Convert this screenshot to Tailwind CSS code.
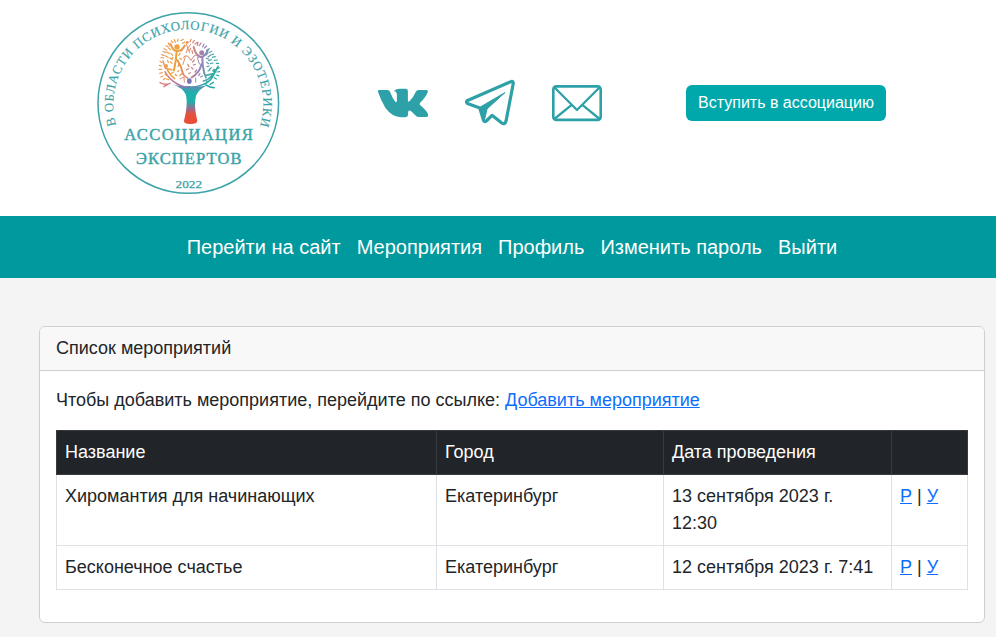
<!DOCTYPE html>
<html lang="ru">
<head>
<meta charset="utf-8">
<title>Список мероприятий</title>
<script src="https://cdn.jsdelivr.net/npm/@tailwindcss/browser@4"></script>
</head>
<body class="min-h-screen bg-[#f4f4f4] font-['Liberation_Sans',Arial,sans-serif] text-[#212529]">
<header class="flex h-[216px] items-center bg-white pb-[10px] pl-[90px]">
  <svg class="mt-[5px] h-[200px] w-[200px] shrink-0 self-start" viewBox="0 0 200 200" role="img" aria-label="Логотип">
    <defs>
      <path id="arc" d="M26.2 120A75 75 0 1 1 170.400 120"/>
      <linearGradient id="crown" gradientUnits="userSpaceOnUse" x1="205" y1="150" x2="392" y2="190">
        <stop offset="0" stop-color="#e79a72"/><stop offset=".28" stop-color="#eea23c"/><stop offset=".48" stop-color="#e0876f"/><stop offset=".68" stop-color="#9a83b5"/><stop offset=".85" stop-color="#3fb0a8"/><stop offset="1" stop-color="#25a9a0"/>
      </linearGradient>
      <linearGradient id="trunk" gradientUnits="userSpaceOnUse" x1="0" y1="228" x2="0" y2="356">
        <stop offset="0" stop-color="#8a74b0"/><stop offset=".28" stop-color="#1fb0ae"/><stop offset=".48" stop-color="#1fb0ae"/><stop offset=".66" stop-color="#a0688a"/><stop offset=".78" stop-color="#e8503a"/><stop offset="1" stop-color="#e84c35"/>
      </linearGradient>
      <linearGradient id="bough" gradientUnits="userSpaceOnUse" x1="225" y1="0" x2="380" y2="0">
        <stop offset="0" stop-color="#dd7f82"/><stop offset=".4" stop-color="#8d75b2"/><stop offset=".75" stop-color="#25aaa8"/><stop offset="1" stop-color="#25aaa8"/>
      </linearGradient>
    </defs>
    <circle cx="98.3" cy="98" r="90.3" fill="none" stroke="#3ca3a8" stroke-width="1.5"/>
    <g fill="#3ca3a8" font-family="'Liberation Serif', serif">
      <text font-size="12.8" stroke="#3ca3a8" stroke-width=".15"><textPath href="#arc" textLength="278" lengthAdjust="spacing">В ОБЛАСТИ ПСИХОЛОГИИ И ЭЗОТЕРИКИ</textPath></text>
      <text x="34.3" y="135.300" font-size="16.500" textLength="128.500" lengthAdjust="spacing" stroke="#3ca3a8" stroke-width=".45">АССОЦИАЦИЯ</text>
      <text x="46" y="158.600" font-size="16.500" textLength="105.500" lengthAdjust="spacing" stroke="#3ca3a8" stroke-width=".45">ЭКСПЕРТОВ</text>
      <text x="85.5" y="182.600" font-size="10.5" textLength="26.5" lengthAdjust="spacingAndGlyphs" stroke="#3ca3a8" stroke-width=".25">2022</text>
    </g>
    <g transform="scale(.33333)" fill="none" stroke-linecap="round" stroke-linejoin="round">
      <path fill="url(#trunk)" d="M246 237Q268 246 298 243Q328 247 351 241Q326 254 319 270C311 295 317 325 322 347Q322 357 302 357Q281 357 282 347C288 324 294 292 287 268Q279 249 246 237Z"/>
      <g stroke="url(#bough)" stroke-width="4.5">
        <path d="M225 200Q236 222 262 237Q280 247 292 246M372 208Q362 231 338 239Q320 246 307 246"/>
        <path d="M210 233Q224 242 240 235M222 245L233 238M348 240Q361 248 373 248M370 232L360 238"/>
      </g>
      <g stroke="url(#crown)" stroke-width="6">
        <path d="M241 116Q248 136 258 138Q274 140 284 122M260 140L257 167L252 196M262 165L273 186L279 207"/>
        <path d="M311 126Q316 150 332 156Q346 156 354 134M337 157L338 180L343 205M334 178Q329 204 305 217"/>
        <path d="M219 168L226 190L246 194M232 195Q243 213 254 221M279 207Q286 217 293 219" stroke-width="4.5"/>
        <path d="M384 184L373 205L348 211M368 209Q357 224 340 228M343 205L348 218" stroke-width="5"/>
        <path d="M279 158Q285 148 294 154L303 166L312 153Q321 146 326 158M286 155L279 178M322 158L328 177" stroke-width="3"/>
        <path d="M289 116L293 130L302 118M293 129L289 143M293 129L299 143M270 222L282 216L283 232M317 219L317 232" stroke-width="3"/>
      </g>
      <g fill="url(#crown)">
        <circle cx="261" cy="126" r="8"/><circle cx="335" cy="143" r="7.5"/><circle cx="228" cy="183" r="6"/><circle cx="373" cy="197" r="6"/><circle cx="292" cy="112" r="4"/>
      </g>
      <ellipse cx="298" cy="228" rx="7" ry="8.5" fill="#7776b3"/>
      <g stroke="url(#crown)" stroke-width="3.6">
        <path d="M244 108l5 5M253 104l3 8M264 102l-1 7M273 107l7-4M278 115l7-4M303 103l-3 8M313 106l-5 7M315 117l8-5M324 112l-2 9M333 114l-5 8M342 118l-4 8M350 123l-7 6M358 131l-8 5M365 139l-8 4M371 147l-9 3M376 155l-9 2M382 165l-9 1M386 175l-7 0M388 188l-6 3M389 200l-8 1M386 212l-7-2M379 222l-6-4"/>
        <path d="M235 114l4 8M228 122l7 4M236 130l6 4M222 131l8 4M219 140l9 2M231 141l7 5M215 149l8 3M213 158l8 1M227 153l7 4M210 169l6 4M208 181l7 2M207 193l8 0M209 205l8-2M212 216l7-3M220 224l6-4M231 212l-6-4M236 224l-7-2"/>
        <path d="M243 145l5 6M238 159l7 2M241 171l5 4M235 173l-2-7M249 157l-3 7M270 145l-4 6M278 134l-5 5M274 163l-5-3M266 178l-2 7M267 196l-4 4M244 205l6-3M260 212l-5-4M270 212l4-5M302 130l-3 6M306 137l2 8M313 165l-5 6M316 178l-6 2M309 192l-5-5M293 178l4 7M289 195l7-4M296 206l5-3M320 195l-5 6M353 145l-5 5M361 151l-7 5M349 160l7 2M364 164l-8 3M350 172l6 4M369 174l-8 2M351 185l7-2M364 188l-6 5M354 198l6-3M326 212l4-6M332 216l6-3M360 216l7 1M349 228l6 3"/>
      </g>
    </g>
  </svg>
  <nav class="ml-[88px] flex items-center text-[#2ea1a8]" aria-label="Контакты">
    <a href="#" class="block w-[50px]" aria-label="ВКонтакте">
      <svg class="h-[50px] w-[50px]" viewBox="0 0 50 50" fill="currentColor">
        <path d="M.8 12H9.500Q11.300 12 12 13.800Q14.500 20.500 17.500 24Q18.900 25 18.900 22V16.500Q18.800 13.500 16 13Q18 10.800 21.500 10.800H27.500Q29.900 10.900 29.900 13V22.500Q30.100 24.500 31.700 23Q35.500 19 38 13.500Q38.600 12 40.500 12H48.600Q50.500 12.200 49.700 14.300Q48 19 42.300 24.600Q41.200 26 42.300 27.300Q48.500 32.500 50 36Q50.600 38.600 48.500 39H41Q39 39 37.500 37.500L33.500 33.500Q30.300 31 30.100 34.500V36.500Q30 39 27.500 39.200H23Q14 39 7.500 30Q2.800 22.500 .1 14Q-.3 12.300 .8 12Z"/>
      </svg>
    </a>
    <a href="#" class="ml-[37px] block w-[50px]" aria-label="Telegram">
      <svg class="h-[50px] w-[50px]" viewBox="0 0 50 50" fill="none" stroke="currentColor" stroke-width="3.200" stroke-linecap="round" stroke-linejoin="round">
        <path d="M2 22.800L46 3.600Q48.700 2.900 48.200 5.800L41 43.300Q39.900 47 36.800 45L27 37.300L21.300 43Q19.200 44.600 18.400 42L14.800 30L2.500 25.400Q.8 24.200 2 22.800Z"/>
        <path d="M14.500 29.500L40 14.500L22 31L19.500 42L15.500 31.500Z" fill="currentColor" stroke-width="1"/>
      </svg>
    </a>
    <a href="#" class="ml-[37px] block w-[50px]" aria-label="Почта">
      <svg class="h-[50px] w-[50px]" viewBox="0 0 50 50" fill="none" stroke="currentColor" stroke-width="2.600" stroke-linejoin="round">
        <rect x="1.300" y="8.400" width="47.400" height="33.500" rx="3"/>
        <path d="M2 9L25 32L48 9M2.300 41L20 26.700M47.700 41L30 26.700" stroke-width="2.300"/>
      </svg>
    </a>
  </nav>
  <a href="#" class="ml-[84px] flex h-9 w-[200px] items-center justify-center rounded-md bg-[#00a8ab] text-base whitespace-nowrap text-white">Вступить в ассоциацию</a>
</header>
<nav class="flex h-[62px] items-center gap-4 bg-[#00999e] pl-[186.7px] text-[20px] leading-[30px] whitespace-nowrap text-white">
  <a href="#">Перейти на сайт</a>
  <a href="#">Мероприятия</a>
  <a href="#">Профиль</a>
  <a href="#">Изменить пароль</a>
  <a href="#">Выйти</a>
</nav>
<main class="pt-12 pr-[11px] pl-[39px] text-[18px] leading-[27px]">
  <section class="overflow-hidden rounded-md border border-[#cfcfcf] bg-white">
    <h1 class="border-b border-[#cfcfcf] bg-[#f8f8f8] px-4 py-2">Список мероприятий</h1>
    <div class="p-4">
      <p class="mb-4">Чтобы добавить мероприятие, перейдите по ссылке: <a href="#" class="text-[#0d6efd] underline">Добавить мероприятие</a></p>
      <table class="mb-4 w-[911px] table-fixed border-collapse text-left align-top">
        <colgroup><col class="w-[380px]"><col class="w-[227px]"><col class="w-[228px]"><col class="w-[76px]"></colgroup>
        <thead class="bg-[#212529] text-white">
          <tr>
            <th class="border border-[#373b3e] p-2 font-normal">Название</th>
            <th class="border border-[#373b3e] p-2 font-normal">Город</th>
            <th class="border border-[#373b3e] p-2 font-normal">Дата проведения</th>
            <th class="border border-[#373b3e] p-2 font-normal"></th>
          </tr>
        </thead>
        <tbody class="align-top">
          <tr>
            <td class="border border-[#dee2e6] p-2">Хиромантия для начинающих</td>
            <td class="border border-[#dee2e6] p-2">Екатеринбург</td>
            <td class="border border-[#dee2e6] p-2">13 сентября 2023 г. 12:30</td>
            <td class="border border-[#dee2e6] p-2"><a href="#" class="text-[#0d6efd] underline">Р</a> | <a href="#" class="text-[#0d6efd] underline">У</a></td>
          </tr>
          <tr>
            <td class="border border-[#dee2e6] p-2">Бесконечное счастье</td>
            <td class="border border-[#dee2e6] p-2">Екатеринбург</td>
            <td class="border border-[#dee2e6] p-2">12 сентября 2023 г. 7:41</td>
            <td class="border border-[#dee2e6] p-2"><a href="#" class="text-[#0d6efd] underline">Р</a> | <a href="#" class="text-[#0d6efd] underline">У</a></td>
          </tr>
        </tbody>
      </table>
    </div>
  </section>
</main>
</body>
</html>
